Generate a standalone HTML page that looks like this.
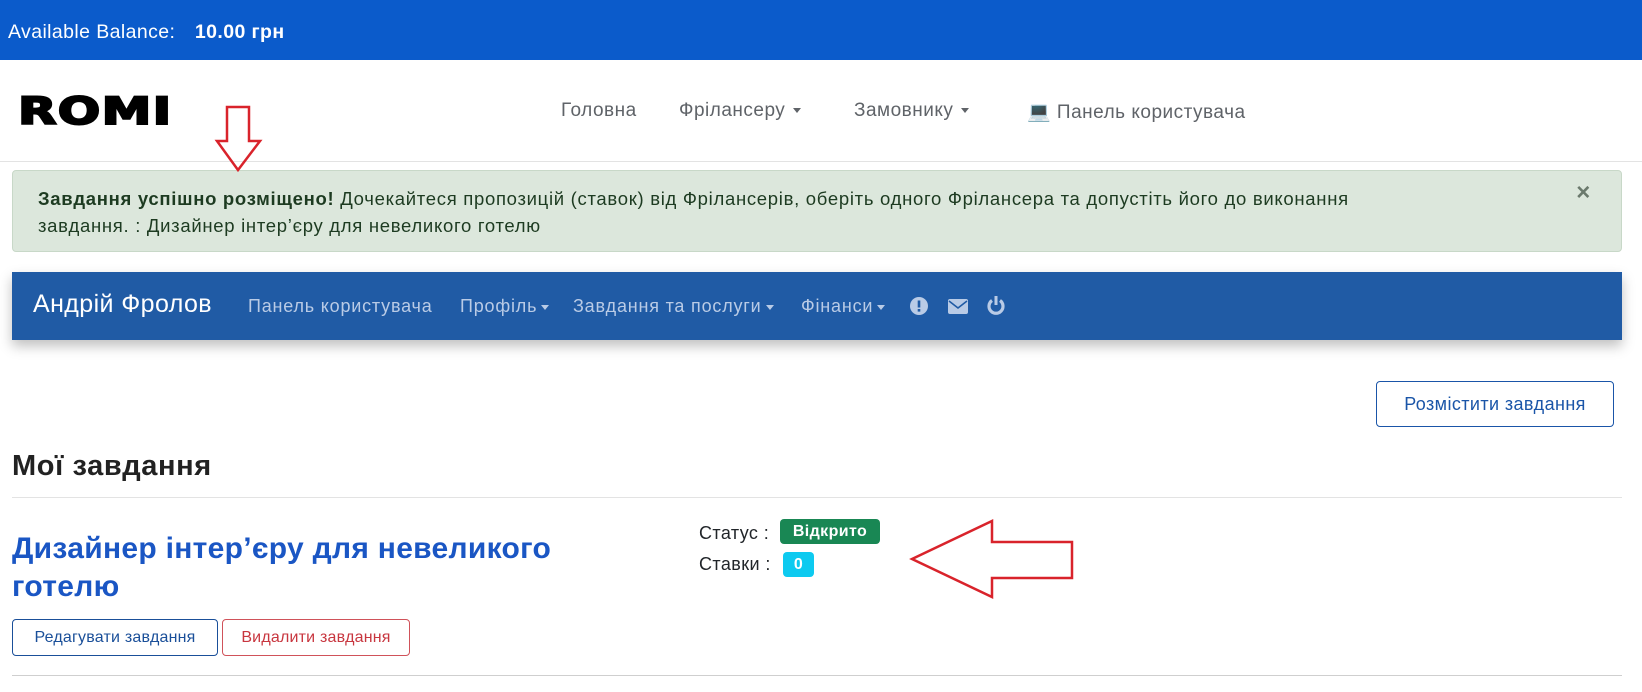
<!DOCTYPE html>
<html><head><meta charset="utf-8"><style>
*{box-sizing:border-box;margin:0;padding:0}
body{width:1642px;height:692px;overflow:hidden;background:#fff;font-family:"Liberation Sans","DejaVu Sans",sans-serif;color:#212529;position:relative;font-size:18px;letter-spacing:.4px}
.a{position:absolute;white-space:nowrap}
.top{position:absolute;left:0;top:0;width:1642px;height:60px;background:#0b5bcb;color:#fff;font-size:19.5px}
.nav{color:#5f6368;font-size:19px;letter-spacing:.5px}
.car{display:inline-block;border-top:5px solid currentColor;border-left:4px solid transparent;border-right:4px solid transparent;vertical-align:middle;margin-left:8px}
.alert{position:absolute;left:12px;top:170px;width:1610px;height:82px;background:#dce7dc;border:1px solid #c8d8c8;border-radius:4px;color:#1d3b21;font-size:18.5px;letter-spacing:.7px;line-height:27px;padding:14px 240px 0 25px}
.bn{position:absolute;left:12px;top:272px;width:1610px;height:68px;background:#205ba5;box-shadow:0 6px 12px rgba(0,0,0,.25)}
.bl{color:#b9cbe6;font-size:18px;letter-spacing:.8px}
.btn{position:absolute;border:1px solid;border-radius:4px;text-align:center;background:#fff}
.badge{position:absolute;color:#fff;font-weight:bold;border-radius:4px;text-align:center;font-size:16px}
</style></head><body>
<div class="top"><span class="a" style="left:8px;top:21px">Available Balance:&nbsp; <b style="margin-left:8px">10.00 грн</b></span></div>
<div class="a" style="left:18px;top:90px;font-family:'DejaVu Sans',sans-serif;font-weight:900;font-size:37px;letter-spacing:1px;transform:scaleX(1.35);transform-origin:left;color:#000;-webkit-text-stroke:2px #000">ROMI</div>
<span class="a nav" style="left:561px;top:100px">Головна</span>
<span class="a nav" style="left:679px;top:100px">Фрілансеру<span class="car"></span></span>
<span class="a nav" style="left:854px;top:100px">Замовнику<span class="car"></span></span>
<span class="a nav" style="left:1027px;top:100px">💻 Панель користувача</span>
<div class="a" style="left:0;top:161px;width:1642px;height:1px;background:#e3e3e3"></div>
<div class="alert"><b>Завдання успішно розміщено!</b> Дочекайтеся пропозицій (ставок) від Фрілансерів, оберіть одного Фрілансера та допустіть його до виконання завдання. : Дизайнер інтер’єру для невеликого готелю
<span class="a" style="right:30px;top:8px;font-size:24px;font-weight:bold;color:#6b7a6d">×</span></div>
<div class="bn">
<span class="a" style="left:21px;top:18px;color:#fff;font-size:25px">Андрій Фролов</span>
<span class="a bl" style="left:236px;top:24px">Панель користувача</span>
<span class="a bl" style="left:448px;top:24px">Профіль<span class="car" style="margin-left:4px"></span></span>
<span class="a bl" style="left:561px;top:24px">Завдання та послуги<span class="car" style="margin-left:4px"></span></span>
<span class="a bl" style="left:789px;top:24px">Фінанси<span class="car" style="margin-left:4px"></span></span>
<svg class="a" style="left:898px;top:25px" width="18" height="18"><circle cx="9" cy="9" r="9" fill="#b9cbe6"/><rect x="7.7" y="3.5" width="2.6" height="7" fill="#205ba5"/><rect x="7.7" y="12" width="2.6" height="2.6" fill="#205ba5"/></svg>
<svg class="a" style="left:936px;top:27px" width="20" height="15"><rect width="20" height="15" rx="2" fill="#b9cbe6"/><path d="M1 2 L10 9 L19 2" stroke="#205ba5" stroke-width="1.6" fill="none"/></svg>
<svg class="a" style="left:975px;top:24px" width="18" height="19"><path d="M5 4.5 A7 7 0 1 0 13 4.5" stroke="#b9cbe6" stroke-width="3.2" fill="none"/><rect x="7.5" y="0" width="3" height="9" fill="#b9cbe6"/></svg>
</div>
<div class="btn" style="left:1376px;top:381px;width:238px;height:46px;line-height:44px;color:#1a55a8;border-color:#1a55a8">Розмістити завдання</div>
<div class="a" style="left:12px;top:450px;font-size:29px;font-weight:bold;color:#222;letter-spacing:.6px">Мої завдання</div>
<div class="a" style="left:12px;top:497px;width:1610px;height:1px;background:#e3e3e3"></div>
<div class="a" style="left:12px;top:530px;font-size:30px;font-weight:bold;color:#1a56c4;line-height:38px;white-space:normal;width:600px;letter-spacing:.3px">Дизайнер інтер’єру для невеликого<br>готелю</div>
<div class="btn" style="left:12px;top:619px;width:206px;height:37px;line-height:35px;color:#1a4f99;border-color:#1a4f99;font-size:16px;letter-spacing:.2px">Редагувати завдання</div>
<div class="btn" style="left:222px;top:619px;width:188px;height:37px;line-height:35px;color:#c8363f;border-color:#d0525a;font-size:16px;letter-spacing:.2px">Видалити завдання</div>
<div class="a" style="left:12px;top:675px;width:1610px;height:1px;background:#cfcfcf"></div>
<span class="a" style="left:699px;top:523px">Статус :</span>
<span class="a" style="left:699px;top:554px">Ставки :</span>
<div class="badge" style="left:780px;top:519px;width:100px;height:25px;line-height:25px;background:#198754">Відкрито</div>
<div class="badge" style="left:783px;top:552px;width:31px;height:25px;line-height:25px;background:#0dcaf0">0</div>
<svg class="a" style="left:0;top:0" width="1642" height="692">
<polygon points="227,107 249,107 249,141 260,141 238,170 217,141 227,141" fill="none" stroke="#d9232b" stroke-width="2.5"/>
<polygon points="912,559 992,521 992,542 1072,542 1072,578 992,578 992,597" fill="none" stroke="#d9232b" stroke-width="2.5"/>
</svg>
</body></html>
